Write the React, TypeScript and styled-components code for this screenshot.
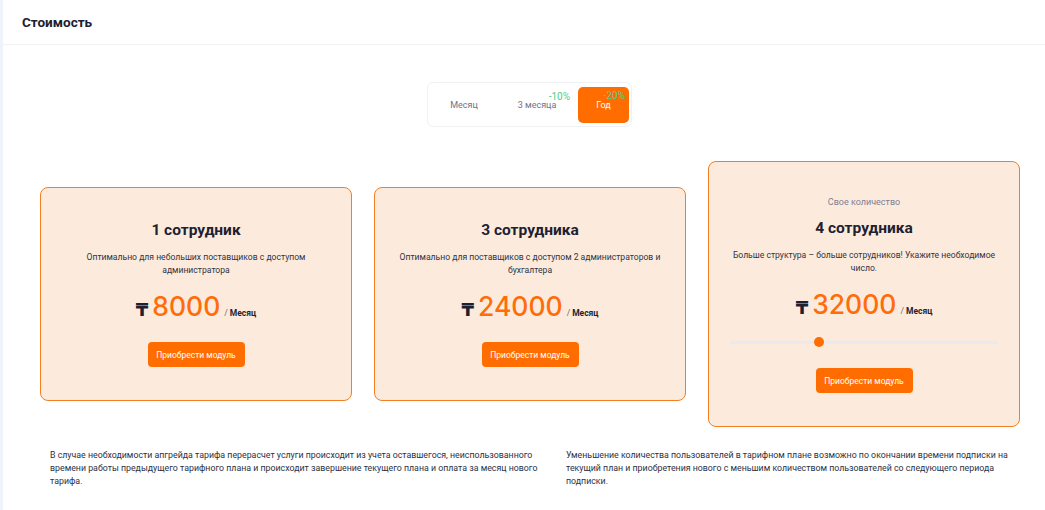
import React from "react";
import styled, { createGlobalStyle } from "styled-components";

const GlobalStyle = createGlobalStyle`
  html, body {
    margin: 0;
    padding: 0;
    background: #eff3fb;
  }
  body {
    font-family: Roboto, "Liberation Sans", Arial, sans-serif;
    color: #1f2433;
  }
  * { box-sizing: border-box; }
`;

const Page = styled.div`
  margin-left: 3px;
  min-height: 510px;
  background: #ffffff;
`;

const Header = styled.header`
  height: 45px;
  display: flex;
  align-items: center;
  padding-left: 19px;
  border-bottom: 1px solid #f1f2f5;
`;

const Title = styled.h1`
  margin: 0;
  font-size: 13.5px;
  font-weight: 700;
  color: #1c2030;
`;

const Main = styled.main`
  display: flex;
  flex-direction: column;
  align-items: center;
  padding: 37px 21px 0 37px;
`;

const Toggle = styled.div`
  display: flex;
  align-items: center;
  width: 205px;
  height: 45px;
  padding: 4px 2px 4px 4px;
  border: 1px solid #f0f1f4;
  border-radius: 6px;
  background: #fff;
  margin-right: 5px;
`;

const ToggleItem = styled.div<{ $w: number; $active?: boolean }>`
  position: relative;
  width: ${(p) => p.$w}px;
  height: 36px;
  display: flex;
  align-items: center;
  justify-content: center;
  font-size: 9px;
  padding-top: 1px;
  border-radius: 5px;
  color: ${(p) => (p.$active ? "#ffffff" : "#6f7488")};
  background: ${(p) => (p.$active ? "#ff6d00" : "transparent")};
`;

const Badge = styled.span<{ $right: number; $top: number }>`
  position: absolute;
  right: ${(p) => p.$right}px;
  top: ${(p) => p.$top}px;
  font-size: 10px;
  color: #4fcf86;
  line-height: 10px;
`;

const Cards = styled.div`
  display: flex;
  align-items: center;
  gap: 22px;
  margin-top: 34px;
  width: 100%;
`;

const Card = styled.div<{ $tall?: boolean }>`
  width: 312px;
  flex: none;
  display: flex;
  flex-direction: column;
  align-items: center;
  text-align: center;
  padding: ${(p) => (p.$tall ? "34px 20px 33px" : "32px 20px 33px")};
  background: #fcebdc;
  border: 1.6px solid #f27f22;
  border-radius: 8px;
`;

const Caption = styled.div`
  font-size: 9px;
  line-height: 12px;
  color: #7d7f95;
  margin-bottom: 10px;
`;

const CardTitle = styled.h2`
  margin: 0;
  font-size: 15.5px;
  line-height: 20px;
  font-weight: 700;
  color: #1d2131;
`;

const Desc = styled.p`
  margin: 11px 0 0;
  font-size: 8.6px;
  line-height: 13px;
  color: #2f3445;
`;

const PriceRow = styled.div`
  display: flex;
  align-items: baseline;
  justify-content: center;
  margin-top: 12px;
  height: 34px;
`;

const Currency = styled.span`
  font-family: "DejaVu Sans", "Noto Sans", sans-serif;
  font-weight: 700;
  font-size: 18px;
  color: #1c2030;
  margin-right: 4px;
`;

const Amount = styled.span`
  font-family: Inter, Roboto, sans-serif;
  font-size: 26.5px;
  line-height: 34px;
  font-weight: 500;
  color: #ff6d0a;
`;

const Per = styled.span`
  font-size: 8.5px;
  font-weight: 700;
  color: #1f2433;
  margin-left: 4px;
  span {
    font-weight: 400;
    color: #666;
    margin-right: 2px;
  }
`;

const BuyButton = styled.button`
  margin-top: 19px;
  width: 97px;
  height: 25px;
  border: none;
  border-radius: 4px;
  background: #ff6c00;
  color: #fff;
  font-family: Roboto, sans-serif;
  font-size: 8.5px;
  cursor: pointer;
`;

const SliderWrap = styled.div`
  position: relative;
  width: 268px;
  height: 10px;
  margin-top: 16px;
  display: flex;
  align-items: center;
  & + ${BuyButton} {
    margin-top: 21px;
  }
`;

const Track = styled.div`
  width: 100%;
  height: 3px;
  border-radius: 2px;
  background: #ebe9f0;
`;

const Thumb = styled.div`
  position: absolute;
  top: 0;
  width: 10px;
  height: 10px;
  border-radius: 50%;
  background: #ff6c00;
  transform: translateX(-50%);
`;

const Notes = styled.div`
  display: grid;
  grid-template-columns: 502px 445px;
  column-gap: 14px;
  width: 100%;
  padding-left: 10px;
  margin-top: 22px;
`;

const Note = styled.p`
  margin: 0;
  font-size: 8.8px;
  line-height: 13px;
  color: #2c3142;
`;

type Plan = {
  title: string;
  desc: string;
  price: string;
  caption?: string;
  slider?: number;
};

const plans: Plan[] = [
  {
    title: "1 сотрудник",
    desc: "Оптимально для небольших поставщиков с доступом администратора",
    price: "8000",
  },
  {
    title: "3 сотрудника",
    desc: "Оптимально для поставщиков с доступом 2 администраторов и бухгалтера",
    price: "24000",
  },
  {
    title: "4 сотрудника",
    desc: "Больше структура – больше сотрудников! Укажите необходимое число.",
    price: "32000",
    caption: "Свое количество",
    slider: 4,
  },
];

export default function App() {
  return (
    <>
      <GlobalStyle />
      <Page>
        <Header>
          <Title>Стоимость</Title>
        </Header>
        <Main>
          <Toggle>
            <ToggleItem $w={64}>Месяц</ToggleItem>
            <ToggleItem $w={82}>
              3 месяца
              <Badge $right={8} $top={5}>-10%</Badge>
            </ToggleItem>
            <ToggleItem $w={51} $active>
              Год
              <Badge $right={4} $top={4}>-20%</Badge>
            </ToggleItem>
          </Toggle>
          <Cards>
            {plans.map((p) => (
              <Card key={p.title} $tall={!!p.caption}>
                {p.caption && <Caption>{p.caption}</Caption>}
                <CardTitle>{p.title}</CardTitle>
                <Desc>{p.desc}</Desc>
                <PriceRow>
                  <Currency>₸</Currency>
                  <Amount>{p.price}</Amount>
                  <Per>
                    <span>/</span>Месяц
                  </Per>
                </PriceRow>
                {p.slider !== undefined && (
                  <SliderWrap>
                    <Track />
                    <Thumb style={{ left: `${((p.slider - 1) / 9) * 100}%` }} />
                  </SliderWrap>
                )}
                <BuyButton>Приобрести модуль</BuyButton>
              </Card>
            ))}
          </Cards>
          <Notes>
            <Note>
              В случае необходимости апгрейда тарифа перерасчет услуги происходит из учета оставшегося,
              неиспользованного времени работы предыдущего тарифного плана и происходит завершение
              текущего плана и оплата за месяц нового тарифа.
            </Note>
            <Note>
              Уменьшение количества пользователей в тарифном плане возможно по окончании времени
              подписки на текущий план и приобретения нового с меньшим количеством пользователей со
              следующего периода подписки.
            </Note>
          </Notes>
        </Main>
      </Page>
    </>
  );
}
